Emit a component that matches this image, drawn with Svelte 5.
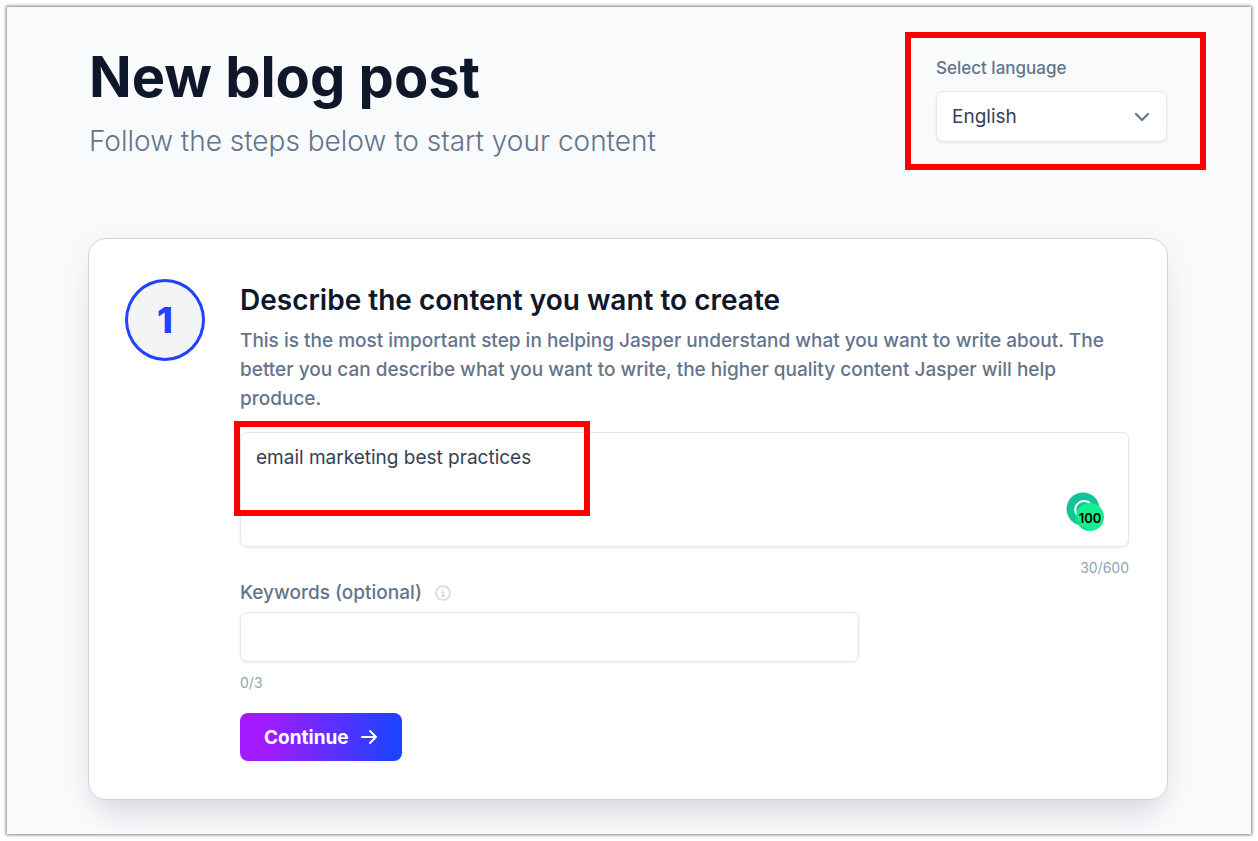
<script>
	const languages = ['English', 'German', 'French', 'Spanish'];
	const maxLength = 600;
	const maxKeywords = 3;

	let language = 'English';
	let description = 'email marketing best practices';
	let keywords = '';

	$: keywordCount = keywords.split(',').filter((k) => k.trim()).length;
</script>

<main class="page">
	<header class="page-header">
		<div>
			<h1>New blog post</h1>
			<p class="subtitle">Follow the steps below to start your content</p>
		</div>

		<div class="language">
			<label for="language">Select language</label>
			<div class="select-wrap">
				<select id="language" bind:value={language}>
					{#each languages as name}
						<option value={name}>{name}</option>
					{/each}
				</select>
				<svg class="chevron" viewBox="0 0 16 16" aria-hidden="true">
					<path d="M2 5l6 6 6-6" />
				</svg>
			</div>
			<div class="marker marker-language"></div>
		</div>
	</header>

	<section class="card">
		<div class="step">1</div>

		<form class="content" on:submit|preventDefault>
			<h2><label for="description">Describe the content you want to create</label></h2>
			<p class="help">
				This is the most important step in helping Jasper understand what you want to write about. The
				better you can describe what you want to write, the higher quality content Jasper will help
				produce.
			</p>

			<div class="description">
				<textarea
					id="description"
					maxlength={maxLength}
					spellcheck="false"
					bind:value={description}
				></textarea>
				<svg class="score" viewBox="0 0 40 40" role="img" aria-label="Writing score 100">
					<circle cx="17" cy="17" r="16.5" fill="#15c39a" />
					<path class="score-ring" d="M11 23A8.500 8.500 0 1 1 25 12.500" />
					<circle cx="24" cy="25" r="14" fill="#11f08e" />
					<path d="M10.200 23A14 14 0 0 0 22 38.800L14 32z" fill="#12d985" />
					<text x="24" y="31" text-anchor="middle">100</text>
				</svg>
				<div class="marker marker-description"></div>
			</div>
			<p class="count count-right">{description.length}/{maxLength}</p>

			<div class="keywords-label">
				<label for="keywords">Keywords (optional)</label>
				<svg class="info" viewBox="0 0 16 16" aria-hidden="true">
					<circle cx="8" cy="8" r="7" />
					<path d="M6.500 7.200H8.200V11.200M6.500 11.200H9.800" />
					<path d="M7.900 4.300V5.300" />
				</svg>
			</div>
			<input id="keywords" type="text" bind:value={keywords} />
			<p class="count">{keywordCount}/{maxKeywords}</p>

			<button type="submit">
				Continue
				<svg class="arrow" viewBox="0 0 18 16" aria-hidden="true">
					<path d="M2 8H16M10 2L16 8L10 14" />
				</svg>
			</button>
		</form>
	</section>
</main>

<style>
	:global(body) {
		margin: 0;
		background: #fff;
	}
	.page {
		box-sizing: border-box;
		min-height: calc(100vh - 14px);
		margin: 7px;
		padding: 40px 83px 34px 81px;
		overflow: hidden;
		background: #f9fafc;
		box-shadow: 0 0 3px 1px rgba(0, 0, 0, 0.5);
		color: #0f172a;
		font-family: Inter, sans-serif;
	}
	h1,
	h2,
	p {
		margin: 0;
	}

	.page-header {
		display: flex;
		align-items: flex-start;
		justify-content: space-between;
		padding: 0 1px;
		margin-bottom: 79px;
	}
	h1 {
		font-size: 56px;
		font-weight: 700;
		line-height: 60px;
	}
	.subtitle {
		margin-top: 16px;
		color: #64748b;
		font-size: 28px;
		font-weight: 300;
		line-height: 36px;
	}

	.language {
		position: relative;
		width: 231px;
		margin-top: 9px;
		color: #64748b;
		font-size: 17px;
		font-weight: 500;
		line-height: 24px;
	}
	.select-wrap {
		position: relative;
		margin-top: 11px;
	}
	select,
	textarea,
	input {
		display: block;
		box-sizing: border-box;
		width: 100%;
		border: 1px solid #e2e8f0;
		border-radius: 7px;
		background: #fff;
		box-shadow: 0 1px 3px rgba(15, 23, 42, 0.08);
		color: #334155;
		font-family: inherit;
		font-size: 19px;
		font-weight: 400;
		line-height: 28px;
	}
	select {
		height: 51px;
		padding: 0 15px;
		appearance: none;
	}
	.chevron {
		position: absolute;
		top: 18px;
		right: 17px;
		width: 16px;
		height: 16px;
		fill: none;
		stroke: #64748b;
		stroke-width: 2.2;
		stroke-linecap: round;
		stroke-linejoin: round;
		pointer-events: none;
	}

	/* red highlight frames laid over the form */
	.marker {
		position: absolute;
		box-sizing: border-box;
		border: 6px solid #f00;
		pointer-events: none;
	}
	.marker-language {
		top: -24px;
		right: -39px;
		bottom: -28px;
		left: -31px;
	}
	.marker-description {
		top: -11px;
		left: -6px;
		width: 356px;
		height: 95px;
	}

	.card {
		display: flex;
		gap: 35px;
		padding: 40px 38px 38px 36px;
		border: 1px solid #cbd5e1;
		border-radius: 18px;
		background: #fff;
		box-shadow: 0 24px 30px -12px rgba(15, 23, 42, 0.12), 0 6px 36px rgba(15, 23, 42, 0.05);
	}
	.step {
		display: flex;
		flex: none;
		align-items: center;
		justify-content: center;
		box-sizing: border-box;
		width: 80px;
		height: 82px;
		border: 3px solid #2142ff;
		border-radius: 50%;
		background: #f3f4f6;
		color: #2142ff;
		font-size: 36px;
		font-weight: 800;
	}
	.content {
		flex: 1;
		min-width: 0;
	}
	h2 {
		padding-top: 3px;
		font-size: 28px;
		font-weight: 600;
		line-height: 36px;
	}
	.help {
		margin-top: 8px;
		color: #64748b;
		font-size: 19px;
		font-weight: 500;
		line-height: 29px;
	}
	.description {
		position: relative;
		margin-top: 19px;
	}
	textarea {
		height: 115px;
		padding: 11px 15px;
		resize: none;
	}
	.score {
		position: absolute;
		right: 23px;
		bottom: 15px;
		width: 40px;
		height: 40px;
	}
	.score-ring {
		fill: none;
		stroke: #fff;
		stroke-width: 2;
	}
	.score text {
		fill: #000;
		font-size: 13px;
		font-weight: 600;
	}
	.count {
		margin-top: 12px;
		color: #94a3b8;
		font-size: 14px;
		line-height: 18px;
	}
	.count-right {
		text-align: right;
	}
	.keywords-label {
		display: flex;
		align-items: center;
		gap: 13px;
		margin-top: 2px;
		margin-bottom: 5px;
		color: #64748b;
		font-size: 19px;
		font-weight: 500;
		line-height: 28px;
	}
	.info {
		width: 16px;
		height: 16px;
		fill: none;
		stroke: #cbd5e1;
		stroke-width: 1.4;
	}
	input {
		max-width: 619px;
		height: 50px;
		padding: 0 15px;
	}
	button {
		display: flex;
		align-items: center;
		gap: 11px;
		height: 48px;
		margin-top: 21px;
		padding: 0 24px;
		border: 0;
		border-radius: 8px;
		background: linear-gradient(90deg, #a31aff 15%, #1f42ff 95%);
		color: #fff;
		font-family: inherit;
		font-size: 19px;
		font-weight: 700;
	}
	.arrow {
		width: 18px;
		height: 16px;
		fill: none;
		stroke: #fff;
		stroke-width: 2;
		stroke-linecap: round;
		stroke-linejoin: round;
	}
</style>
